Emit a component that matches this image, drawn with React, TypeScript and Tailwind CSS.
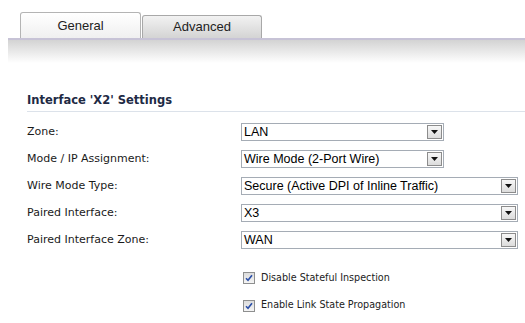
import React from "react";

function Select({ value, wide }: { value: string; wide?: boolean }) {
  return (
    <div
      className={`h-[18px] flex items-center border border-[#a5acb5] bg-white pl-[2px] pr-[1px] ${
        wide ? "w-[277px]" : "w-[203px]"
      }`}
    >
      <span className="flex-1 text-[12.5px] leading-none text-black font-['Liberation_Sans',Arial,sans-serif]">
        {value}
      </span>
      <div className="w-[15px] h-[14px] border border-[#8c8c8c] bg-gradient-to-b from-[#f7f7f7] to-[#dcdcdc] flex items-center justify-center">
        <svg width="7" height="4" viewBox="0 0 7 4">
          <path d="M0 0H7L3.5 4Z" fill="#111" />
        </svg>
      </div>
    </div>
  );
}

function Check({ label }: { label: string }) {
  return (
    <div className="flex items-center gap-[6px]">
      <div className="w-[12px] h-[12px] border border-[#8e8f8f] bg-gradient-to-b from-[#dcdcdc] to-[#f5f5f5] flex items-center justify-center">
        <svg width="8" height="8" viewBox="0 0 8 8">
          <path d="M1 4.2L3 6.3L7 1.2" stroke="#2b4fa8" strokeWidth="1.6" fill="none" />
        </svg>
      </div>
      <span className="text-[9.6px] text-[#222] font-['DejaVu_Sans',Tahoma,sans-serif]">{label}</span>
    </div>
  );
}

const rows: { label: string; value: string; wide?: boolean }[] = [
  { label: "Zone:", value: "LAN" },
  { label: "Mode / IP Assignment:", value: "Wire Mode (2-Port Wire)" },
  { label: "Wire Mode Type:", value: "Secure (Active DPI of Inline Traffic)", wide: true },
  { label: "Paired Interface:", value: "X3", wide: true },
  { label: "Paired Interface Zone:", value: "WAN", wide: true },
];

export default function App() {
  return (
    <div className="w-[525px] h-[323px] bg-white overflow-hidden font-['DejaVu_Sans',Tahoma,sans-serif]">
      {/* tabs */}
      <div className="flex items-end pl-[20px] pt-[12px] h-[38px]">
        <div className="w-[121px] h-[26px] border border-b-0 border-[#b4b4b4] rounded-t-[3px] bg-gradient-to-b from-white to-[#f0f0f0] flex items-center justify-center text-[13px] text-[#222] font-['Liberation_Sans',Arial,sans-serif]">
          General
        </div>
        <div className="ml-[1px] w-[120px] h-[23px] border border-b-0 border-[#a8a8a8] rounded-t-[3px] bg-gradient-to-b from-[#f2f2f2] to-[#d4d4d4] flex items-center justify-center text-[13px] text-[#222] font-['Liberation_Sans',Arial,sans-serif]">
          Advanced
        </div>
      </div>
      <div className="ml-[8px] h-[25px] border-t-2 border-[#c7c3d6] bg-gradient-to-b from-[#d3d3d3] to-white" />

      {/* section */}
      <div className="pl-[27px] pt-[30px]">
        <div className="border-b border-[#dce2ea] pb-[3px] text-[11.5px] leading-[15px] font-bold text-[#1e2a44] font-['DejaVu_Sans',Verdana,sans-serif]">
          Interface 'X2' Settings
        </div>
        <div className="flex flex-col gap-[9px] pt-[11px]">
          {rows.map((r) => (
            <div key={r.label} className="flex items-center">
              <span className="w-[214px] text-[11px] text-[#1a1a1a]">{r.label}</span>
              <Select value={r.value} wide={r.wide} />
            </div>
          ))}
        </div>
        <div className="flex flex-col gap-[13px] pl-[216px] pt-[22px]">
          <Check label="Disable Stateful Inspection" />
          <Check label="Enable Link State Propagation" />
        </div>
      </div>
    </div>
  );
}
